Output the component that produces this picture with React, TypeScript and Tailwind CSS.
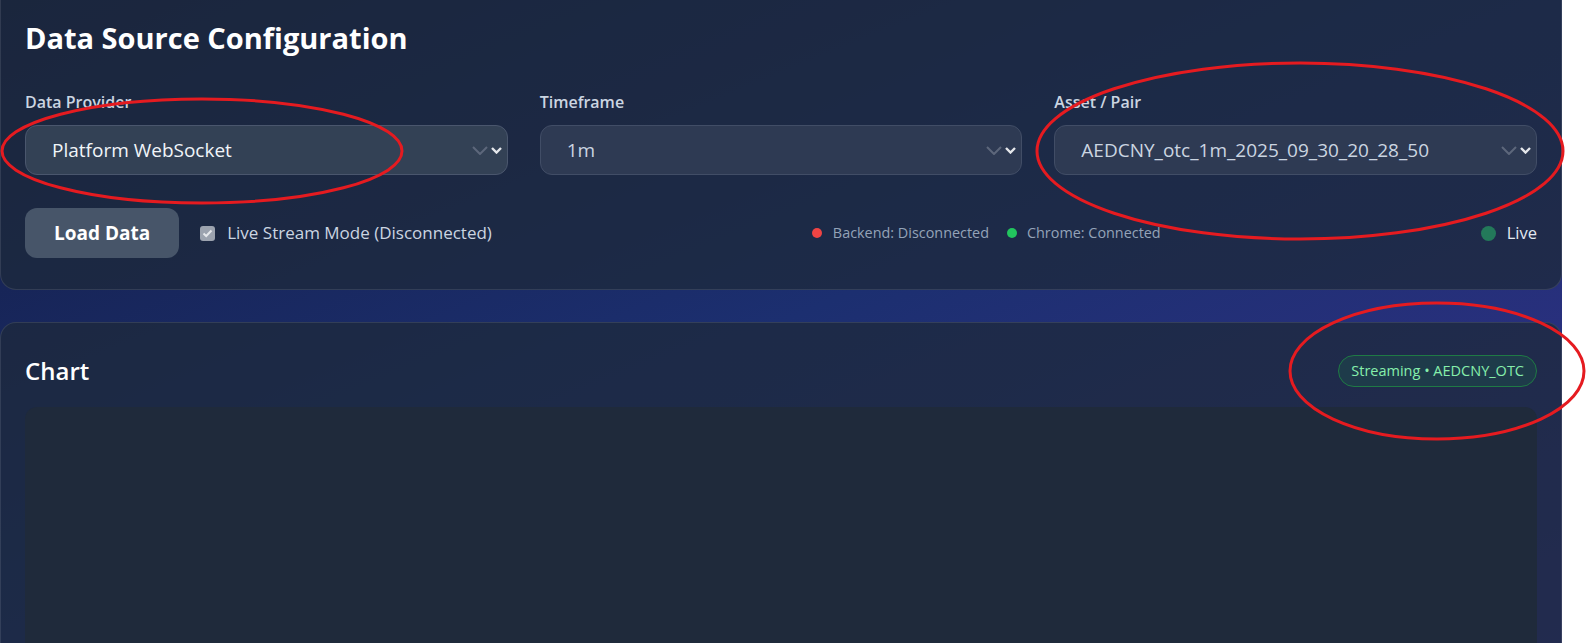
import React from 'react';

const Chevrons: React.FC = () => (
  <div className="flex items-center gap-[3px]">
    <svg width="16" height="9" viewBox="0 0 16 9" fill="none">
      <polyline points="1,1 8,8 15,1" stroke="#5d677b" strokeWidth="2" />
    </svg>
    <svg width="11" height="7" viewBox="0 0 11 7" fill="none">
      <polyline points="1,1 5.5,5.5 10,1" stroke="#e5e7eb" strokeWidth="2.4" />
    </svg>
  </div>
);

const Field: React.FC<{ label: string; value: string; active?: boolean }> = ({ label, value, active }) => (
  <div className="flex flex-col">
    <label className="mb-[12px] text-[16px] leading-[22px] font-semibold text-[#cbd5e1]">{label}</label>
    <div
      className={
        active
          ? 'flex h-[50px] items-center justify-between rounded-xl border border-[#4a566d] bg-[#334155] pl-[26px] pr-[5px] text-[19px] text-[#f1f5f9]'
          : 'flex h-[50px] items-center justify-between rounded-xl border border-[#414d66] bg-[#2e3a53] pl-[26px] pr-[5px] text-[19px] text-[#cbd5e1]'
      }
    >
      <span>{value}</span>
      <Chevrons />
    </div>
  </div>
);

const App: React.FC = () => {
  return (
    <div className="relative flex h-[643px] overflow-hidden bg-white font-['Open_Sans',sans-serif]">
      <div className="w-[1562px] shrink-0 bg-linear-to-br from-[#131d45] via-[#1c2f70] to-[#33308a]">
        {/* data source panel */}
        <div className="-mt-[20px] rounded-2xl border border-white/10 bg-[#1e293b]/75 px-6 pt-[39px] pb-[31px]">
          <h2 className="mb-[35px] text-[29px] leading-[36px] font-bold text-white">Data Source Configuration</h2>

          <div className="grid grid-cols-3 gap-8">
            <Field label="Data Provider" value="Platform WebSocket" active />
            <Field label="Timeframe" value="1m" />
            <Field label="Asset / Pair" value="AEDCNY_otc_1m_2025_09_30_20_28_50" />
          </div>

          <div className="mt-[33px] flex items-center justify-between">
            <div className="flex items-center">
              <button className="h-[50px] rounded-xl bg-[#475569] px-[29px] text-[19px] font-bold text-white">
                Load Data
              </button>
              <div className="ml-[21px] flex h-[15px] w-[15px] items-center justify-center rounded-[3px] bg-[#9ca3af]">
                <svg width="11" height="9" viewBox="0 0 11 9" fill="none">
                  <polyline points="1.5,4.5 4.2,7 9.5,1.5" stroke="#e5e7eb" strokeWidth="2" />
                </svg>
              </div>
              <span className="ml-[12px] text-[17px] text-[#cbd5e1]">Live Stream Mode (Disconnected)</span>
            </div>

            <div className="flex items-center text-[14.4px] text-[#94a3b8]">
              <span className="mr-[11px] h-[10px] w-[10px] rounded-full bg-[#ef4444]" />
              <span>Backend: Disconnected</span>
              <span className="mr-[10px] ml-[18px] h-[10px] w-[10px] rounded-full bg-[#22c55e]" />
              <span>Chrome: Connected</span>
            </div>

            <div className="flex items-center">
              <span className="mr-[11px] h-[15px] w-[15px] rounded-full bg-[#23795a]" />
              <span className="text-[16.5px] text-[#e2e8f0]">Live</span>
            </div>
          </div>
        </div>

        {/* chart panel */}
        <div className="mt-8 rounded-2xl border border-white/10 bg-[#1e293b]/75 px-6 pt-8">
          <div className="flex items-center justify-between">
            <h3 className="text-[24px] leading-[32px] font-semibold text-white">Chart</h3>
            <span className="rounded-full border border-[#1f7a45] bg-[#1e3b4a] px-3 py-[4px] text-[14.5px] text-[#86efac]">
              Streaming • AEDCNY_OTC
            </span>
          </div>
          <div className="mt-[20px] h-[400px] rounded-xl bg-[#1f2a3b]" />
        </div>
      </div>

      {/* hand-drawn annotation marks */}
      <svg className="pointer-events-none absolute inset-0" width="1587" height="643" fill="none">
        <ellipse cx="202" cy="151" rx="200" ry="52" stroke="#e51b20" strokeWidth="3" />
        <ellipse cx="1300" cy="151" rx="263" ry="88" stroke="#e51b20" strokeWidth="3" />
        <ellipse cx="1437" cy="371" rx="147" ry="68" stroke="#e51b20" strokeWidth="3" />
      </svg>
    </div>
  );
};

export default App;
